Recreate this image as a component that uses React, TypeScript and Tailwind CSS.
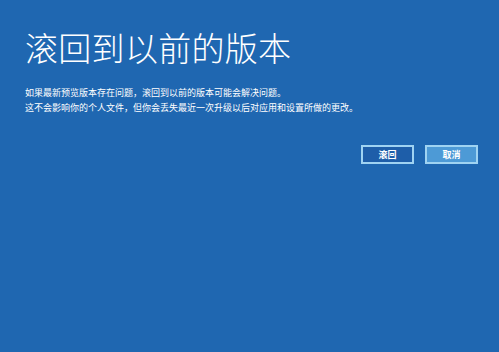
export default function App() {
  return (
    <div
      className="w-[499px] h-[352px] bg-[#1f67b1] text-white overflow-hidden"
      style={{ fontFamily: '"Noto Sans CJK SC", "Noto Sans", sans-serif' }}
    >
      <div className="pl-[25px] pr-[21px] pt-[30px]">
        <h1 className="text-[33px] leading-[34px] font-light tracking-[0.3px]">滚回到以前的版本</h1>
        <div className="mt-[21px] text-[9px] leading-[15px]">
          <p>如果最新预览版本存在问题，滚回到以前的版本可能会解决问题。</p>
          <p>这不会影响你的个人文件，但你会丢失最近一次升级以后对应用和设置所做的更改。</p>
        </div>
        <div className="mt-[30px] flex justify-end gap-[11px]">
          <button className="w-[53px] h-[19px] border-2 border-[#9fd3f2] bg-[#1e5ea9] text-[9px] font-bold text-white leading-none">
            滚回
          </button>
          <button className="w-[53px] h-[19px] border-2 border-[#9fd3f2] bg-[#4d9ad6] text-[9px] font-bold text-white leading-none">
            取消
          </button>
        </div>
      </div>
    </div>
  );
}
